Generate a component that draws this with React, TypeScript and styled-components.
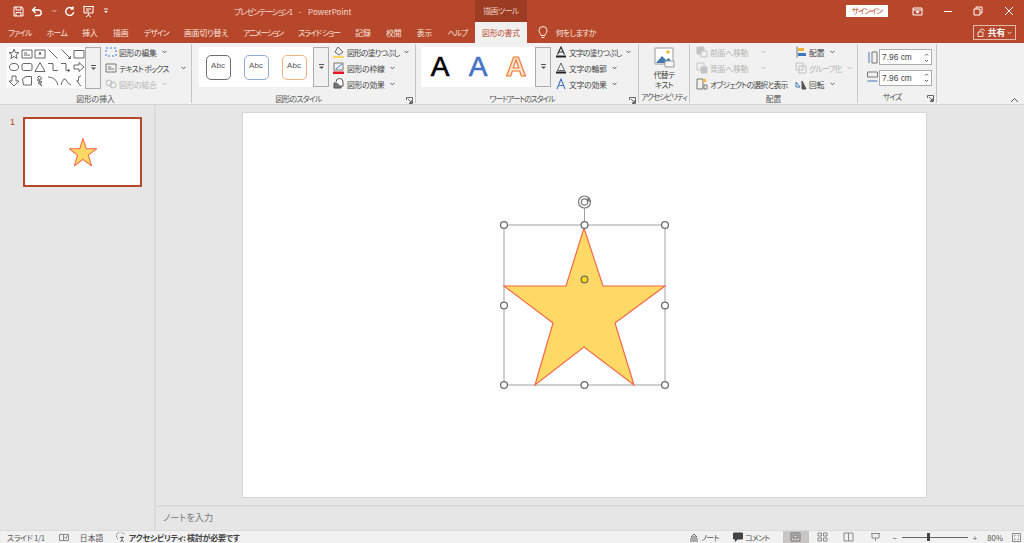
import React from "react";
import styled, { createGlobalStyle } from "styled-components";

const accent = "#b7472a";
const cjk = `"Noto Sans CJK JP", "Noto Sans", sans-serif`;

const GlobalStyle = createGlobalStyle`
  html, body { margin: 0; padding: 0; height: 100%; overflow: hidden; }
  body { font-family: ${cjk}; background: #e6e6e6; color: #444; font-feature-settings: "palt"; }
  #root { height: 100%; }
`;

const Window = styled.div`
  width: 1024px;
  height: 543px;
  display: flex;
  flex-direction: column;
  overflow: hidden;
`;

/* Title bar */
const TitleBar = styled.div`
  height: 22px;
  display: flex;
  background: ${accent};
  color: #fff;
`;
const Qat = styled.div`
  width: 234px;
  display: flex;
  align-items: center;
  padding-left: 13px;
  box-sizing: border-box;
  gap: 7px;
`;
const DocTitle = styled.div`
  width: 241px;
  font-size: 8px;
  line-height: 23px;
  color: #f4dcd5;
  white-space: pre;
  word-spacing: 1.5px;
`;
const Kana = styled.span`
  letter-spacing: -1.1px;
`;
const ContextTab = styled.div`
  width: 52px;
  background: #9c3d23;
  color: #ecc9bd;
  font-size: 8px;
  letter-spacing: -0.6px;
  line-height: 22px;
  text-align: center;
`;
const TitleRight = styled.div`
  flex: 1;
  display: flex;
  align-items: center;
  justify-content: flex-end;
`;
const SignIn = styled.div`
  width: 42px;
  height: 12px;
  background: #fff;
  color: ${accent};
  font-size: 7.8px;
  letter-spacing: -0.9px;
  line-height: 12px;
  text-align: center;
  margin-right: 14px;
`;
const WinButton = styled.div`
  width: 30.5px;
  display: flex;
  justify-content: center;
`;

/* Tabs */
const TabRow = styled.div`
  height: 21px;
  display: flex;
  background: ${accent};
  padding-left: 8px;
  gap: 15.2px;
  position: relative;
`;
const Tab = styled.div<{ $active?: boolean; $k?: number }>`
  font-size: 7.8px;
  letter-spacing: ${(p) => p.$k ?? 0}px;
  line-height: 22px;
  white-space: nowrap;
  color: ${(p) => (p.$active ? accent : "#f8e4de")};
  ${(p) =>
    p.$active &&
    `background: #f1f1f1; margin: 0 -7.5px; padding: 0 7px; width: 38px; text-align: center;`}
`;
const TellMe = styled.div`
  display: flex;
  align-items: center;
  gap: 8px;
  font-size: 7.8px;
  letter-spacing: -0.5px;
  color: #f8e4de;
  margin-left: 3px;
`;
const Share = styled.div`
  position: absolute;
  left: 973px;
  top: 3px;
  width: 43px;
  height: 15px;
  border: 1px solid #e3b9ab;
  box-sizing: border-box;
  display: flex;
  align-items: center;
  justify-content: center;
  gap: 2px;
  font-size: 8.8px;
  font-weight: 700;
  color: #fff;
`;

/* Ribbon */
const Ribbon = styled.div`
  height: 61px;
  display: flex;
  background: #f1f1f1;
  border-bottom: 1px solid #d4d4d4;
  position: relative;
`;
const Group = styled.div<{ $w: number }>`
  width: ${(p) => p.$w}px;
  flex-shrink: 0;
  box-sizing: border-box;
  display: flex;
  flex-direction: column;
  border-right: 1px solid #c6c6c6;
  margin: 1px 0 1px;
`;
const GroupBody = styled.div<{ $pad?: number }>`
  height: 48px;
  display: flex;
  padding-left: ${(p) => p.$pad ?? 5}px;
`;
const GroupLabel = styled.div<{ $k?: number; $launcher?: boolean }>`
  flex: 1;
  font-size: 7.8px;
  letter-spacing: ${(p) => p.$k ?? 0}px;
  line-height: 13px;
  text-align: center;
  position: relative;
  color: #555;
  white-space: nowrap;
  padding-right: ${(p) => (p.$launcher ? 10 : 0)}px;
`;
const Launcher = styled.span`
  position: absolute;
  right: 2px;
  bottom: 1px;
  display: flex;
`;
const ShapeGrid = styled.div`
  width: 78px;
  height: 41px;
  margin-top: 3px;
  flex-shrink: 0;
  background: #fff;
  display: grid;
  grid-template-columns: repeat(6, 13px);
  grid-template-rows: repeat(3, 13.6px);
  place-items: center;
`;
const StyleGallery = styled.div`
  width: 114px;
  height: 40px;
  margin-top: 3px;
  flex-shrink: 0;
  background: #fff;
  display: grid;
  grid-template-columns: repeat(3, 1fr);
  align-items: center;
  justify-items: center;
`;
const Tile = styled.div<{ $c: string }>`
  width: 25px;
  height: 25px;
  border: 1.4px solid ${(p) => p.$c};
  border-radius: 5px;
  box-sizing: border-box;
  font-family: "Liberation Sans", sans-serif;
  font-size: 8px;
  line-height: 20px;
  text-align: center;
  color: #555;
`;
const BigA = styled.div<{ $c: string; $outline?: boolean }>`
  font-family: "Liberation Sans", Arial, sans-serif;
  font-size: 28px;
  line-height: 40px;
  font-weight: ${(p) => (p.$outline ? 700 : 400)};
  color: ${(p) => (p.$outline ? "#fde9da" : p.$c)};
  -webkit-text-stroke: ${(p) => (p.$outline ? "1.2px" : "0.6px")} ${(p) => p.$c};
`;
const GalleryScroll = styled.div<{ $h: number }>`
  width: 16px;
  flex-shrink: 0;
  height: ${(p) => p.$h}px;
  margin-top: 3px;
  border: 1px solid #ababab;
  box-sizing: border-box;
  background: #f1f1f1;
  display: flex;
  align-items: center;
  justify-content: center;
`;
const CmdColumn = styled.div<{ $ml: number; $w?: number }>`
  margin-left: ${(p) => p.$ml}px;
  ${(p) => p.$w && `width: ${p.$w}px; flex-shrink: 0;`}
  display: flex;
  flex-direction: column;
`;
const Cmd = styled.div<{ $off?: boolean; $k?: number }>`
  height: 16px;
  display: flex;
  align-items: center;
  gap: 2px;
  font-size: 7.8px;
  letter-spacing: ${(p) => p.$k ?? 0}px;
  white-space: pre;
  color: ${(p) => (p.$off ? "#b4b4b4" : "#444")};
`;
const ChevronSlot = styled.span<{ $ml?: number }>`
  display: flex;
  margin-left: ${(p) => p.$ml ?? 3}px;
`;
const BigCommand = styled.div`
  width: 50px;
  display: flex;
  flex-direction: column;
  align-items: center;
  font-size: 7.8px;
  letter-spacing: -0.5px;
  line-height: 10px;
  text-align: center;
  padding-top: 3px;
`;
const BigLabel = styled.span`
  &:first-of-type {
    margin-top: 2px;
  }
`;
const SizeRow = styled.div`
  display: flex;
  align-items: center;
  gap: 1px;
  height: 20.5px;
  &:first-child {
    margin-top: 3px;
  }
`;
const Spinner = styled.div`
  width: 53px;
  height: 16px;
  border: 1px solid #ababab;
  background: #fff;
  box-sizing: border-box;
  display: flex;
  align-items: center;
  justify-content: space-between;
  padding: 0 2px;
  font-family: "Liberation Sans", sans-serif;
  font-size: 8.4px;
`;
const Collapse = styled.span`
  position: absolute;
  right: 5px;
  bottom: 1px;
  display: flex;
`;

/* Workspace */
const Workspace = styled.div`
  flex: 1;
  min-height: 0;
  display: flex;
  background: #e6e6e6;
`;
const ThumbPane = styled.div`
  width: 156px;
  border-right: 2px solid #dcdcdc;
  box-sizing: border-box;
  display: flex;
  align-items: flex-start;
  padding: 12px 0 0 10px;
  gap: 9px;
`;
const ThumbNumber = styled.div`
  width: 4px;
  font-family: "Liberation Sans", sans-serif;
  font-size: 9px;
  line-height: 10px;
  color: ${accent};
`;
const Thumb = styled.div`
  width: 119px;
  height: 70px;
  background: #fff;
  border: 2px solid ${accent};
  box-sizing: border-box;
  display: flex;
  align-items: center;
  justify-content: center;
`;
const EditArea = styled.div`
  flex: 1;
  min-width: 0;
  display: flex;
  flex-direction: column;
`;
const SlideArea = styled.div`
  flex: 1;
  min-height: 0;
  padding: 8px 98px 8px 87px;
  display: flex;
`;
const Slide = styled.div`
  flex: 1;
  background: #fff;
  box-shadow: 0 0 0 1px #d6d6d6;
  position: relative;
`;
const Selection = styled.svg`
  position: absolute;
  left: 252px;
  top: 77px;
`;
const Notes = styled.div`
  height: 25px;
  box-sizing: border-box;
  border-top: 2px solid #dcdcdc;
  font-size: 9.2px;
  line-height: 21px;
  padding-left: 7px;
  color: #777;
`;

/* Status bar */
const StatusBar = styled.div`
  height: 13px;
  box-sizing: border-box;
  background: #f1f1f1;
  border-top: 1px solid #dcdcdc;
  display: flex;
  align-items: center;
  font-size: 7.8px;
  padding: 0 3px 0 7px;
  color: #555;
  white-space: nowrap;
`;
const StatusItem = styled.div<{ $ml?: number; $bold?: boolean; $k?: number }>`
  display: flex;
  align-items: center;
  gap: 2px;
  margin-left: ${(p) => p.$ml ?? 0}px;
  letter-spacing: ${(p) => p.$k ?? 0}px;
  ${(p) => p.$bold && "font-weight: 700; color: #444; font-size: 8px;"}
`;
const StatusRight = styled.div`
  margin-left: auto;
  display: flex;
  align-items: center;
`;
const ViewGroup = styled.div`
  display: flex;
  margin-left: 13px;
`;
const ViewButton = styled.div<{ $active?: boolean }>`
  width: 26.5px;
  height: 13px;
  display: flex;
  align-items: center;
  justify-content: center;
  background: ${(p) => (p.$active ? "#c8c6c4" : "transparent")};
`;
const ZoomSlider = styled.div`
  width: 66px;
  height: 1px;
  background: #666;
  margin: 0 3px;
  position: relative;
`;
const ZoomKnob = styled.span`
  position: absolute;
  left: 25px;
  top: -4px;
  width: 3px;
  height: 8px;
  background: #444;
`;

/* Small drawings */
const Svg = ({
  w = 12,
  h = 12,
  c = "#555",
  sw = 1,
  children,
}: {
  w?: number;
  h?: number;
  c?: string;
  sw?: number;
  children: React.ReactNode;
}): JSX.Element => (
  <svg width={w} height={h} viewBox={`0 0 ${w} ${h}`} fill="none" stroke={c} strokeWidth={sw} style={{ flexShrink: 0 }}>
    {children}
  </svg>
);

const Chevron = ({ c = "#555", ml }: { c?: string; ml?: number }): JSX.Element => (
  <ChevronSlot $ml={ml}>
    <Svg w={5} h={4} c={c}>
      <path d="M.5 .8 2.5 2.8 4.5 .8" />
    </Svg>
  </ChevronSlot>
);

const MoreArrow = (): JSX.Element => (
  <Svg w={7} h={6}>
    <path d="M1 .5H6" />
    <path d="M1 2.5 3.5 5 6 2.5Z" fill="#555" stroke="none" />
  </Svg>
);

const LauncherIcon = (): JSX.Element => (
  <Launcher>
    <Svg w={7} h={7} c="#666">
      <path d="M.5 3V.5H6.5V6.5H3M2 2 5.5 5.5M5.5 3.5V5.5H3.5" />
    </Svg>
  </Launcher>
);

const shapePaths = [
  "M6 1 7.4 4.6H11L8.1 6.9 9.2 10.6 6 8.4 2.8 10.6 3.9 6.9 1 4.6H4.6Z",
  "M1 2H11V10H1ZM3 7H9M3 5H6",
  "M1 2H11V10H1ZM5 7 6 4 7 7",
  "M1.5 1.5 10.5 10.5",
  "M1.5 1.5 10 10M8 10.5H10.5V8",
  "M1 2.5H11V10H1Z",
  "M1.5 6A4.5 3.5 0 1 0 10.5 6 4.5 3.5 0 1 0 1.5 6",
  "M2.5 2.5H9.5Q11 2.5 11 4V8Q11 9.5 9.5 9.5H2.5Q1 9.5 1 8V4Q1 2.5 2.5 2.5Z",
  "M6 1.5 11 10.5H1Z",
  "M1 2.5H6V9.5H11",
  "M1 2.5H6V9.5H9M8 8 10 9.5 8 11",
  "M1 4H6V1.5L11 6 6 10.5V8H1Z",
  "M4 1H8V6H11L6 11 1 6H4Z",
  "M1.5 4 5 1.5H10.5V10H2.5Z",
  "M5 1 8 3.5 5 5 8 7 6 8 8 11 4 8 6 7 3 5 5 3.5 3.5 2.5Z",
  "M1 2Q9 2 11 10",
  "M1 10Q4 1 6 5T11 10",
  "M8 1Q5 1 5.5 4T3.5 6Q5.5 6.5 5.5 8T8 11",
];

const starPath = "M80 3 62 61H0L49 98 31 160 80 122 130 160 111 98 161 61H99Z";

const handles: [number, number][] = [
  [9, 35], [89.5, 35], [170, 35],
  [9, 115.5], [170, 115.5],
  [9, 195], [89.5, 195], [170, 195],
];

const tabs: [string, number][] = [
  ["ファイル", -0.9],
  ["ホーム", -0.6],
  ["挿入", 0],
  ["描画", 0],
  ["デザイン", -0.9],
  ["画面切り替え", -0.1],
  ["アニメーション", -1.3],
  ["スライド ショー", -0.9],
  ["記録", 0],
  ["校閲", 0],
  ["表示", 0],
  ["ヘルプ", -0.9],
];

const App = (): JSX.Element => {
  return (
    <Window>
      <GlobalStyle />
      <TitleBar>
        <Qat>
          <Svg c="#fff" w={11} h={11}>
            <path d="M1 1H9L10 2V10H1Z M3 1V4H8V1 M3 10V6.5H8V10" />
          </Svg>
          <Svg c="#fff" w={14} h={11} sw={1.4}>
            <path d="M2 4H7.5A2.7 2.7 0 0 1 7.5 9.5H4 M4.5 1 1.5 4 4.5 7" />
          </Svg>
          <Chevron c="#f2cfc4" ml={0} />
          <Svg c="#fff" w={11} h={11} sw={1.4}>
            <path d="M8.5 2.5A4 4 0 1 0 9.7 6 M9 .5V3H6.5" />
          </Svg>
          <Svg c="#fff" w={13} h={13}>
            <path d="M1 1.5H12 M2 1.5V8H11V1.5 M6.5 8V10 M4 12 6.5 10 9 12 M4 4H9M4 6H7" />
          </Svg>
          <Svg c="#fff" w={8} h={6}>
            <path d="M2 1H6" />
            <path d="M2 3 4 5 6 3Z" fill="#fff" stroke="none" />
          </Svg>
        </Qat>
        <DocTitle>
          <Kana>プレゼンテーション1</Kana>  -  PowerPoint
        </DocTitle>
        <ContextTab>描画ツール</ContextTab>
        <TitleRight>
          <SignIn>サインイン</SignIn>
          <WinButton>
            <Svg c="#fff" w={11} h={9}>
              <path d="M1 1H10V8H1ZM1 3H10" />
              <path d="M3.5 5 5.5 3.5 7.5 5 5.5 6.5Z" fill="#fff" stroke="none" />
            </Svg>
          </WinButton>
          <WinButton>
            <Svg c="#fff" w={10} h={3}>
              <path d="M1 1.5H9" />
            </Svg>
          </WinButton>
          <WinButton>
            <Svg c="#fff" w={10} h={10}>
              <path d="M1 3H7V9H1ZM3 3V1H9V7H7" />
            </Svg>
          </WinButton>
          <WinButton>
            <Svg c="#fff" w={10} h={10}>
              <path d="M1 1 9 9M9 1 1 9" />
            </Svg>
          </WinButton>
        </TitleRight>
      </TitleBar>

      <TabRow>
        {tabs.map(([t, k]) => (
          <Tab key={t} $k={k}>
            {t}
          </Tab>
        ))}
        <Tab $active $k={-0.2}>
          図形の書式
        </Tab>
        <TellMe>
          <Svg c="#fbe9e3" w={10} h={13}>
            <path d="M3 9.5C3 7.5 1 7 1 4.5A4 4 0 0 1 9 4.5C9 7 7 7.5 7 9.5ZM3.5 11.5H6.5" />
          </Svg>
          何をしますか
        </TellMe>
        <Share>
          <Svg c="#f4d9d0" w={9} h={9}>
            <path d="M1 4H6V8.5H1ZM3 4V2.5Q3 1 5 1T7.5 3" />
          </Svg>
          共有
          <Chevron c="#f4d9d0" ml={0} />
        </Share>
      </TabRow>

      <Ribbon>
        <Group $w={192}>
          <GroupBody $pad={7}>
            <ShapeGrid>
              {shapePaths.map((d, i) => (
                <Svg key={i} c="#666">
                  <path d={d} />
                </Svg>
              ))}
            </ShapeGrid>
            <GalleryScroll $h={42}>
              <MoreArrow />
            </GalleryScroll>
            <CmdColumn $ml={4}>
              <Cmd $k={-0.2}>
                <Svg c="#3a7bc8">
                  <path d="M1 2H11V10H1Z" strokeDasharray="2 2" />
                </Svg>
                図形の編集
                <Chevron />
              </Cmd>
              <Cmd $k={-0.75}>
                <Svg c="#777">
                  <path d="M1 2H11V10H1ZM3 7H9M3 5H6" />
                </Svg>
                テキスト ボックス
                <Chevron ml={10} />
              </Cmd>
              <Cmd $off $k={-0.2}>
                <Svg c="#bdbdbd">
                  <path d="M1 5A3 3 0 1 0 7 5 3 3 0 1 0 1 5M5 7A3 3 0 1 0 11 7 3 3 0 1 0 5 7" />
                </Svg>
                図形の結合
                <Chevron c="#bbb" />
              </Cmd>
            </CmdColumn>
          </GroupBody>
          <GroupLabel>図形の挿入</GroupLabel>
        </Group>

        <Group $w={224}>
          <GroupBody $pad={7}>
            <StyleGallery>
              <Tile $c="#707070">Abc</Tile>
              <Tile $c="#8eaadb">Abc</Tile>
              <Tile $c="#f4b183">Abc</Tile>
            </StyleGallery>
            <GalleryScroll $h={40}>
              <MoreArrow />
            </GalleryScroll>
            <CmdColumn $ml={4}>
              <Cmd $k={-0.8}>
                <Svg c="#666">
                  <path d="M5 1 10 6 6 9 2 6Z" />
                  <path d="M0 10H11V12H0Z" fill="#ffd966" stroke="none" />
                </Svg>
                図形の塗りつぶし
                <Chevron />
              </Cmd>
              <Cmd $k={-0.2}>
                <Svg c="#3a7bc8">
                  <path d="M1 1H10V8H1Z" stroke="#777" />
                  <path d="M3 7 9 2" />
                  <path d="M0 9.5H11V12H0Z" fill="#e81123" stroke="none" />
                </Svg>
                図形の枠線
                <Chevron />
              </Cmd>
              <Cmd $k={-0.2}>
                <Svg c="#555">
                  <path d="M1 5H8V10H1Z" fill="#777" />
                  <path d="M3 4A3 3 0 0 1 10 4V8H8" fill="#fff" />
                </Svg>
                図形の効果
                <Chevron />
              </Cmd>
            </CmdColumn>
          </GroupBody>
          <GroupLabel $k={-0.7} $launcher>
            図形のスタイル
            <LauncherIcon />
          </GroupLabel>
        </Group>

        <Group $w={223}>
          <GroupBody $pad={5}>
            <StyleGallery>
              <BigA $c="#000">A</BigA>
              <BigA $c="#4472c4">A</BigA>
              <BigA $c="#ed7d31" $outline>A</BigA>
            </StyleGallery>
            <GalleryScroll $h={40}>
              <MoreArrow />
            </GalleryScroll>
            <CmdColumn $ml={4}>
              <Cmd $k={-0.8}>
                <Svg c="#333" sw={1.2}>
                  <path d="M2.5 8.5 6 1 9.5 8.5M4 6H8" />
                  <path d="M1 9.5H11V11.5H1Z" fill="#222" stroke="none" />
                </Svg>
                文字の塗りつぶし
                <Chevron />
              </Cmd>
              <Cmd $k={-0.2}>
                <Svg c="#444" sw={0.8}>
                  <path d="M2.5 8.5 6 1 9.5 8.5Z" />
                  <path d="M1 9.5H11V11.5H1Z" fill="#222" stroke="none" />
                </Svg>
                文字の輪郭
                <Chevron />
              </Cmd>
              <Cmd $k={-0.2}>
                <Svg c="#4472c4" sw={1.1}>
                  <path d="M2 11 6 1 10 11M4 7.5H8" />
                </Svg>
                文字の効果
                <Chevron />
              </Cmd>
            </CmdColumn>
          </GroupBody>
          <GroupLabel $k={-1.1} $launcher>
            ワードアートのスタイル
            <LauncherIcon />
          </GroupLabel>
        </Group>

        <Group $w={51}>
          <GroupBody $pad={0}>
            <BigCommand>
              <Svg w={21} h={21} c="#9a9a9a">
                <path d="M1 1H19V17H1Z" fill="#fff" />
                <path d="M2 16 8 9 12 13 15 11 18 16Z" fill="#3f78b5" stroke="none" />
                <circle cx="14" cy="5" r="1.7" fill="#f2b233" stroke="none" />
                <path d="M11 14H20V20H11Z" fill="#f4f4f4" />
              </Svg>
              <BigLabel>代替テ</BigLabel>
              <BigLabel>キスト</BigLabel>
            </BigCommand>
          </GroupBody>
          <GroupLabel $k={-1.1}>アクセシビリティ</GroupLabel>
        </Group>

        <Group $w={168}>
          <GroupBody $pad={6}>
            <CmdColumn $ml={0} $w={99}>
              <Cmd $off $k={-0.2}>
                <Svg c="#c4c4c4">
                  <path d="M1 1H8V8H1Z" fill="#c4c4c4" />
                  <path d="M5 5H11V11H5Z" fill="#f1f1f1" />
                </Svg>
                前面へ移動
                <Chevron c="#bbb" ml={11} />
              </Cmd>
              <Cmd $off $k={-0.2}>
                <Svg c="#c4c4c4">
                  <path d="M1 1H8V8H1Z" />
                  <path d="M5 5H11V11H5Z" fill="#c4c4c4" />
                </Svg>
                背面へ移動
                <Chevron c="#bbb" ml={11} />
              </Cmd>
              <Cmd $k={-0.75}>
                <Svg c="#777">
                  <path d="M1 1H7V11H1ZM8 7H11V11H8Z" />
                  <path d="M7 1H10V4H7Z" fill="#f2b233" stroke="none" />
                </Svg>
                オブジェクトの選択と表示
              </Cmd>
            </CmdColumn>
            <CmdColumn $ml={0}>
              <Cmd>
                <Svg c="#777">
                  <path d="M2 .5V11.5" />
                  <path d="M3 2H9V5H3Z" fill="#f2b233" stroke="none" />
                  <path d="M3 7H11V10H3Z" fill="#3f78b5" stroke="none" />
                </Svg>
                配置
                <Chevron />
              </Cmd>
              <Cmd $off $k={-0.8}>
                <Svg c="#c0c0c0">
                  <path d="M1 1H8V8H1ZM4 4H11V11H4Z" />
                </Svg>
                グループ化
                <Chevron c="#bbb" />
              </Cmd>
              <Cmd>
                <Svg c="#555">
                  <path d="M7 11V3L11 11Z" fill="#555" />
                  <path d="M1 9 5 9 1 4Z" stroke="#3f78b5" fill="none" />
                </Svg>
                回転
                <Chevron />
              </Cmd>
            </CmdColumn>
          </GroupBody>
          <GroupLabel>配置</GroupLabel>
        </Group>

        <Group $w={79}>
          <GroupBody $pad={9}>
            <CmdColumn $ml={0}>
              <SizeRow>
                <Svg w={11} h={13} c="#777">
                  <path d="M5 1H10V12H5Z" />
                  <path d="M2 1V12" stroke="#3f78b5" />
                </Svg>
                <Spinner>
                  7.96 cm
                  <Svg w={5} h={11}>
                    <path d="M1 3.5 2.5 2 4 3.5M1 8 2.5 9.5 4 8" />
                  </Svg>
                </Spinner>
              </SizeRow>
              <SizeRow>
                <Svg w={11} h={13} c="#777">
                  <path d="M.5 1H10.5V6H.5Z" />
                  <path d="M.5 10H10.5" stroke="#3f78b5" />
                </Svg>
                <Spinner>
                  7.96 cm
                  <Svg w={5} h={11}>
                    <path d="M1 3.5 2.5 2 4 3.5M1 8 2.5 9.5 4 8" />
                  </Svg>
                </Spinner>
              </SizeRow>
            </CmdColumn>
          </GroupBody>
          <GroupLabel $k={-1} $launcher>
            サイズ
            <LauncherIcon />
          </GroupLabel>
        </Group>
        <Collapse>
          <Svg w={9} h={6} c="#555">
            <path d="M1 5 4.5 1.5 8 5" />
          </Svg>
        </Collapse>
      </Ribbon>

      <Workspace>
        <ThumbPane>
          <ThumbNumber>1</ThumbNumber>
          <Thumb>
            <svg width={28} height={28} viewBox="0 0 161 160">
              <path d={starPath} fill="#ffd966" stroke="#f4694a" strokeWidth={6} />
            </svg>
          </Thumb>
        </ThumbPane>
        <EditArea>
          <SlideArea>
            <Slide>
              <Selection width={180} height={205} viewBox="0 0 180 205" fill="none">
                <path d="M89.5 14V35" stroke="#a0a0a0" />
                <rect x={9} y={35} width={161} height={160} stroke="#a0a0a0" />
                <g transform="translate(9 35)">
                  <path d={starPath} fill="#ffd966" stroke="#f4694a" strokeWidth={1.2} />
                </g>
                {handles.map(([x, y]) => (
                  <circle key={`${x}-${y}`} cx={x} cy={y} r={3.4} fill="#fff" stroke="#6e6e6e" strokeWidth={1.3} />
                ))}
                <circle cx={89.5} cy={89.5} r={3.4} fill="#ffd800" stroke="#6e6e6e" strokeWidth={1.3} />
                <circle cx={89.5} cy={12} r={6} stroke="#7a7a7a" strokeWidth={1.2} fill="#fff" />
                <circle cx={89.5} cy={12} r={3.2} stroke="#7a7a7a" strokeWidth={1.2} />
                <path d="M93 7 96.5 11.5 91.5 11.5Z" fill="#7a7a7a" />
              </Selection>
            </Slide>
          </SlideArea>
          <Notes>ノートを入力</Notes>
        </EditArea>
      </Workspace>

      <StatusBar>
        <StatusItem $k={-0.3}>スライド 1/1</StatusItem>
        <StatusItem $ml={14}>
          <Svg w={10} h={9} c="#888">
            <path d="M.5 1.5H4.5V7.5H.5ZM4.5 1.5H9.5V7.5H4.5ZM5.5 4 6.8 5.5 8.5 2.5" />
          </Svg>
        </StatusItem>
        <StatusItem $ml={11}>日本語</StatusItem>
        <StatusItem $ml={12.6} $bold $k={-0.3}>
          <Svg w={11} h={11} c="#666">
            <path d="M8 2A4 4 0 1 0 2 7" strokeDasharray="1.5 1" />
            <path d="M6 4.5V7.5M4 5.5H8M6 7.5 4.5 10M6 7.5 7.5 10" />
          </Svg>
          アクセシビリティ: 検討が必要です
        </StatusItem>
        <StatusRight>
          <StatusItem $k={-0.6}>
            <Svg w={10} h={9} c="#666">
              <path d="M1 8H9M1 6H9M5 1 8 4H2Z" />
            </Svg>
            ノート
          </StatusItem>
          <StatusItem $ml={14} $k={-0.7}>
            <Svg w={10} h={10} c="#444">
              <path d="M.5 1H9.5V7H4L2.5 9.5V7H.5Z" fill="#444" />
            </Svg>
            コメント
          </StatusItem>
          <ViewGroup>
            <ViewButton $active>
              <Svg w={11} h={10} c="#777">
                <path d="M1 1H10V9H1ZM3 3H8V6H3Z" />
              </Svg>
            </ViewButton>
            <ViewButton>
              <Svg w={11} h={10} c="#888">
                <path d="M1 1H4.5V4H1ZM6.5 1H10V4H6.5ZM1 6H4.5V9H1ZM6.5 6H10V9H6.5Z" />
              </Svg>
            </ViewButton>
            <ViewButton>
              <Svg w={11} h={10} c="#888">
                <path d="M1 1H5.5V9H1ZM5.5 1H10V9H5.5Z" />
              </Svg>
            </ViewButton>
            <ViewButton>
              <Svg w={11} h={10} c="#888">
                <path d="M1 1.5H10M2 1.5V6H9V1.5M5.5 6V9" />
              </Svg>
            </ViewButton>
          </ViewGroup>
          <StatusItem $ml={4}>
            <span>−</span>
            <ZoomSlider>
              <ZoomKnob />
            </ZoomSlider>
            <span>+</span>
          </StatusItem>
          <StatusItem $ml={10}>80%</StatusItem>
          <StatusItem $ml={9}>
            <Svg w={9} h={9} c="#888">
              <path d="M.5 .5H8.5V8.5H.5ZM2.5 3.5V2.5H3.5M5.5 2.5H6.5V3.5M6.5 5.5V6.5H5.5M3.5 6.5H2.5V5.5" />
            </Svg>
          </StatusItem>
        </StatusRight>
      </StatusBar>
    </Window>
  );
};

export default App;
